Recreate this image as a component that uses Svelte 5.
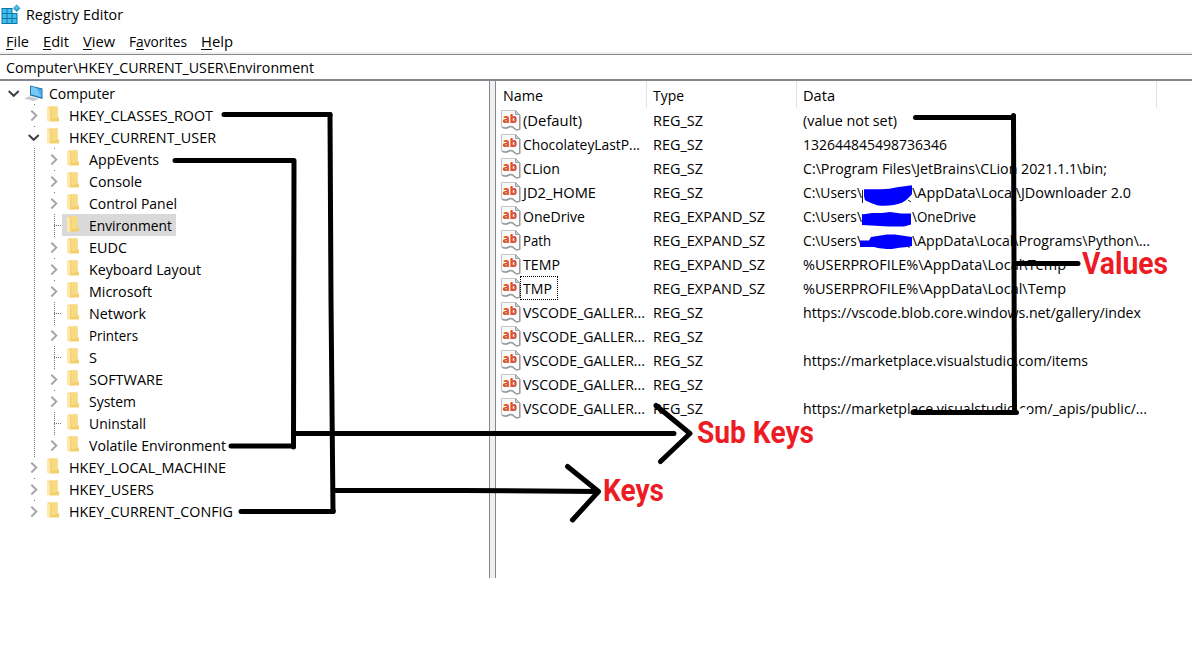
<script>
  const menu = [
    ['F', 'ile', 23, '', 37],
    ['E', 'dit', 26, '', 40],
    ['V', 'iew', 32, '', 46],
    ['a', 'vorites', 58, 'F', 72],
    ['H', 'elp', 32, '', 40]
  ];

  // level, label, label width, state
  const keys = [
    [0, 'Computer', 66, 'open'],
    [1, 'HKEY_CLASSES_ROOT', 144, 'closed'],
    [1, 'HKEY_CURRENT_USER', 147, 'open'],
    [2, 'AppEvents', 70, 'closed'],
    [2, 'Console', 53, 'closed'],
    [2, 'Control Panel', 88, 'closed'],
    [2, 'Environment', 83, 'leaf', true],
    [2, 'EUDC', 38, 'closed'],
    [2, 'Keyboard Layout', 112, 'closed'],
    [2, 'Microsoft', 63, 'closed'],
    [2, 'Network', 57, 'leaf'],
    [2, 'Printers', 49, 'closed'],
    [2, 'S', 8, 'leaf'],
    [2, 'SOFTWARE', 74, 'closed'],
    [2, 'System', 47, 'closed'],
    [2, 'Uninstall', 57, 'leaf'],
    [2, 'Volatile Environment', 137, 'closed'],
    [1, 'HKEY_LOCAL_MACHINE', 157, 'closed'],
    [1, 'HKEY_USERS', 85, 'closed'],
    [1, 'HKEY_CURRENT_CONFIG', 164, 'closed', false, true]
  ];

  const SZ = ['REG_SZ', 50];
  const EX = ['REG_EXPAND_SZ', 112];
  // name, name width, type, data pieces as [text, width]
  const values = [
    ['(Default)', 59, SZ, [['(value not set)', 94]]],
    ['ChocolateyLastP...', 117, SZ, [['132644845498736346', 144]]],
    ['CLion', 37, SZ, [['C:\\Program Files\\JetBrains\\CLion 2021.1.1\\bin;', 304]]],
    ['JD2_HOME', 73, SZ, [['C:\\Users\\', 59], null, ['\\AppData\\Local\\JDownloader 2.0', 219]]],
    ['OneDrive', 62, EX, [['C:\\Users\\', 59], null, ['\\OneDrive', 64]]],
    ['Path', 28, EX, [['C:\\Users\\', 59], null, ['\\AppData\\Local\\Programs\\Python\\...', 238]]],
    ['TEMP', 37, EX, [['%USERPROFILE%\\AppData\\Local\\Temp', 263]]],
    ['TMP', 29, EX, [['%USERPROFILE%\\AppData\\Local\\Temp', 263]], true],
    ['VSCODE_GALLER...', 122, SZ, [['https://vscode.blob.core.windows.net/gallery/index', 338]]],
    ['VSCODE_GALLER...', 122, SZ, []],
    ['VSCODE_GALLER...', 122, SZ, [['https://marketplace.visualstudio.com/items', 285]]],
    ['VSCODE_GALLER...', 122, SZ, []],
    ['VSCODE_GALLER...', 122, SZ, [['https://marketplace.visualstudio.com/_apis/public/...', 344]]]
  ];

  function fit(node, width) {
    const natural = node.getBoundingClientRect().width;
    node.style.transform = `scaleX(${width / natural})`;
    node.style.marginRight = `${width - natural}px`;
  }
</script>

{#snippet folder()}
  <svg class="folder" width="13" height="17" viewBox="0 0 13 17">
    <path d="M1 .5h9.500v11h1.500v4H3z" fill="#f3cf6c" />
    <path d="M4 .5h6.500v11H12l-8 2z" fill="#f8da82" />
    <path d="M0 .5l3.700 2v14L0 14.800z" fill="#ffe9a9" />
    <path d="M3.800 3v12" stroke="#e6c056" stroke-width=".6" />
  </svg>
{/snippet}

<div class="window">
  <header class="title">
    <svg width="21" height="22" viewBox="0 0 21 22">
      <path d="M1.500 5h16v16h-16z" fill="#0b76a8" />
      <path d="M2.500 6h4v4h-4zM7.500 6h4v4h-4zM2.500 11h4v4h-4zM7.500 11h4v4h-4zM12.500 11h4v4h-4zM2.500 16h4v4h-4zM7.500 16h4v4h-4zM12.500 16h4v4h-4z" fill="#45bdec" />
      <path d="M12.500 1H21v9h-8.500z" fill="#fff" />
      <path d="M16.700 1.500l3.700 3.700-3.700 3.700L13 5.200z" fill="#1f8fc0" />
      <path d="M16.700 2.500l2.600 2.500-2.600 1.800L14 5z" fill="#55c4ee" />
    </svg>
    <span class="t" use:fit={97}>Registry Editor</span>
  </header>
  <nav>
    {#each menu as [key, rest, width, before, step]}
      <div class="item" style:width="{step}px"><span class="t" use:fit={width}>{before}<u>{key}</u>{rest}</span></div>
    {/each}
  </nav>
  <div class="address"><span class="t" use:fit={308}>Computer\HKEY_CURRENT_USER\Environment</span></div>

  <main>
    <section class="tree">
      {#each keys as [level, label, width, state, selected, last]}
        <div class="node">
          {#if level > 0}<i class="indent" class:line={level === 2}></i>{/if}
          <div class="cell" class:guide={level > 0} class:last>
            {#if state === 'leaf'}
              <i class="stub"></i>
            {:else}
              <svg class="chev" width="16" height="20" viewBox="0 0 16 20">
                {#if level > 0}<path d="M0 0h16v20H0z" fill="#fff" />{/if}
                {#if state === 'open'}
                  <path d="M2.700 8l5 4.800 5-4.800" fill="none" stroke="#404040" stroke-width="2" />
                {:else}
                  <path d="M5.300 5.700l5 4.900-5 4.900" fill="none" stroke="#a6a6a6" stroke-width="2" />
                {/if}
              </svg>
            {/if}
          </div>
          <div class="entry" class:selected>
            {#if level === 0}
              <svg class="pc" width="20" height="18" viewBox="0 0 20 18">
                <path d="M6 1.500l12.500 3V15L6 11.500z" fill="#2d6f9f" />
                <path d="M7 2.500l10.700 3v8L7 10.500z" fill="#45aeea" />
                <path d="M7 2.500l6 1.700 4 8.500-10-2.500z" fill="#75caf8" />
                <path d="M0 14.500l5-2.200 10 2.500-5 2.500z" fill="#d0d6dd" />
                <path d="M2 14.500l5-1.500M5 15.300l5-1.500M8 16.200l5-1.500" stroke="#b4bcc4" stroke-width=".6" />
              </svg>
            {:else}
              {@render folder()}
            {/if}
            <span class="t" use:fit={width}>{label}</span>
          </div>
        </div>
      {/each}
    </section>
    <div class="splitter"></div>
    <section class="list">
      <div class="row head">
        <div class="name"><span class="t" use:fit={40}>Name</span></div>
        <div class="type"><span class="t" use:fit={31}>Type</span></div>
        <div class="data"><span class="t" use:fit={32}>Data</span></div>
      </div>
      {#each values as [name, width, type, data, focused]}
        <div class="row">
          <div class="name">
            <svg class="reg" width="21" height="22" viewBox="0 0 21 22">
              <path d="M1.500 1.500h14l4 4V20c-2 1.500-4 .5-5-.5s-3-3-5.500-1.500-4 2-7.500 0z" fill="#fafafa" stroke="#c4c4c4" />
              <path d="M15.500 1.500v4h4z" fill="#d5d5d5" stroke="#a0a0a0" />
              <path d="M19.800 6v14c-2 1.500-4.300.5-5.300-.5s-3-3-5.500-1.500-4 2-7 0" fill="none" stroke="#999" stroke-width="1.500" />
              <text x="2.500" y="14" textLength="14.500" lengthAdjust="spacingAndGlyphs">ab</text>
            </svg>
            <div class="label" class:focused><span class="t" use:fit={width}>{name}</span></div>
          </div>
          <div class="type"><span class="t" use:fit={type[1]}>{type[0]}</span></div>
          <div class="data">
            {#each data as piece}
              {#if piece}<span class="t" use:fit={piece[1]}>{piece[0]}</span>{:else}<i class="hidden"></i>{/if}
            {/each}
          </div>
        </div>
      {/each}
    </section>
  </main>

  <svg class="marks" width="1192" height="648" viewBox="0 0 1192 648">
    <path class="erase" d="M1018 408.500h8l3 3v3h-11z" />
    <path class="trace" d="M862.500 190v13M862.500 214v4M908 200l3 2M907 245h2v3" />
    <g class="blue">
      <path d="M864 189.200h17q9 0 16-2l15-2v9l-5 5q-4 4-12 5.500-10 2-18 .5-6-2-12-5l-1-4z" />
      <path d="M862 214.500l10-1.500 10 0 8-1 11 1.500h10v11l-7 2h-15l-27-1.500z" />
      <path d="M860 240.500h9l2-3.500 16-2.500h8l17 2.500v9l-5 1q-8 .5-15 2-11 0-18-2h-14z" />
    </g>
    <g class="pen">
      <path d="M224 114.500H330L331 300 333 511.500H241M333 490.500L462 490.500 598 491.500M567.500 466.500L598.500 491.500 572.500 520" />
      <path d="M175 160.500H294L293.500 446H231M294 433.500H674M656 405.500L690 433.500 660.500 461.500" />
      <path d="M915.500 117.500H1013.500L1014.500 412M913 412.500H1016.500M1015 263.500H1078" />
      <path d="M330 114.500v.5M333.200 511v.5M293.500 446v1M1013.500 115.500v2" />
    </g>
  </svg>
  <div class="note" style:left="697px" style:top="421px"><span use:fit={117}>Sub Keys</span></div>
  <div class="note" style:left="603px" style:top="479px"><span use:fit={61}>Keys</span></div>
  <div class="note" style:left="1082px" style:top="252px"><span use:fit={86}>Values</span></div>
</div>

<style>
  :global(body) { margin: 0; background: #fff; overflow: hidden; }
  .window {
    position: relative; width: 1192px; height: 648px; overflow: hidden;
    box-sizing: border-box; background: #fff; color: #000;
    font: 14.6px/20px "Open Sans", "Noto Sans", sans-serif;
    display: flex; flex-direction: column;
  }
  .t { display: inline-block; white-space: pre; transform-origin: 0 50%; flex: none; }
  .title { height: 29px; display: flex; align-items: center; box-sizing: border-box; flex: none; }
  .title svg { margin: -1px 5px 0 0; }
  .title .t { margin-top: -2px; }
  nav { height: 25px; flex: none; display: flex; align-items: center; padding-left: 6px; border-bottom: 1px solid #828790; box-shadow: inset 0 -2px #f0f0f0; }
  .item { flex: none; height: 22px; }
  u { text-underline-offset: 2px; text-decoration-thickness: 1px; text-decoration-skip-ink: none; }
  .address { height: 24px; flex: none; padding-left: 6px; display: flex; align-items: center; border-bottom: 2px solid #828790; }
  main { display: flex; height: 497px; }
  .tree { width: 485px; padding: 1px 0 0 4px; }
  .node { display: flex; height: 22px; align-items: stretch; }
  .cell { width: 20px; flex: none; display: flex; }
  .indent { width: 20px; flex: none; }
  .indent.line { width: 40px; background: repeating-linear-gradient(#777 0 1px, transparent 1px 2px) 30px 0 / 1px 100% no-repeat; }
  .guide { background: repeating-linear-gradient(#777 0 1px, transparent 1px 2px) 10px 0 / 1px 100% no-repeat; }
  .last { background-size: 1px 2px; }
  .chev { margin: 1px 0 0 2px; }
  .stub { width: 8px; height: 1px; margin: 11px 0 0 10px; background: repeating-linear-gradient(90deg, #777 0 1px, transparent 1px 2px); }
  .entry { display: flex; align-items: center; margin-left: -2px; padding: 0 4px 0 5px; }
  .selected { background: #d9d9d9; }
  .folder { margin: -1px 9px 0 0; }
  .pc { margin: 0 5px 0 -3px; }
  .splitter { width: 5px; background: #f0f0f0; border: solid #828790; border-width: 0 1px; }
  .list { flex: 1; }
  .row { display: flex; height: 24px; align-items: center; }
  .head { height: 27px; }
  .head > div { height: 27px; padding-top: 1px; box-sizing: border-box; border-right: 1px solid #e2e2e2; }
  .head .t { margin-top: -1px; }
  .head .name { padding-left: 7px; }
  .name, .type, .data { display: flex; align-items: center; box-sizing: border-box; flex: none; }
  .name { width: 151px; padding-left: 4px; }
  .type { width: 150px; padding-left: 6px; }
  .data { width: 360px; padding-left: 6px; }
  .reg { flex: none; }
  .reg text { font: 800 13px "Open Sans", sans-serif; fill: #dc5130; }
  .label { height: 24px; box-sizing: border-box; display: flex; align-items: center; padding: 0 5px 0 2px; border: 1px dotted transparent; margin-left: -1px; }
  .focused { border-color: #000; }
  .hidden { width: 50px; }
  .marks { position: absolute; left: 0; top: 0; }
  .pen { fill: none; stroke: #000; stroke-width: 5; stroke-linecap: round; stroke-linejoin: round; }
  .trace { fill: none; stroke: #222; }
  .blue { fill: #00f; }
  .erase { fill: #fff; }
  .note { position: absolute; color: #ed1c24; font: bold 31px/24px Roboto, sans-serif; white-space: pre; }
  .note span { display: inline-block; transform-origin: 0 50%; }
</style>
